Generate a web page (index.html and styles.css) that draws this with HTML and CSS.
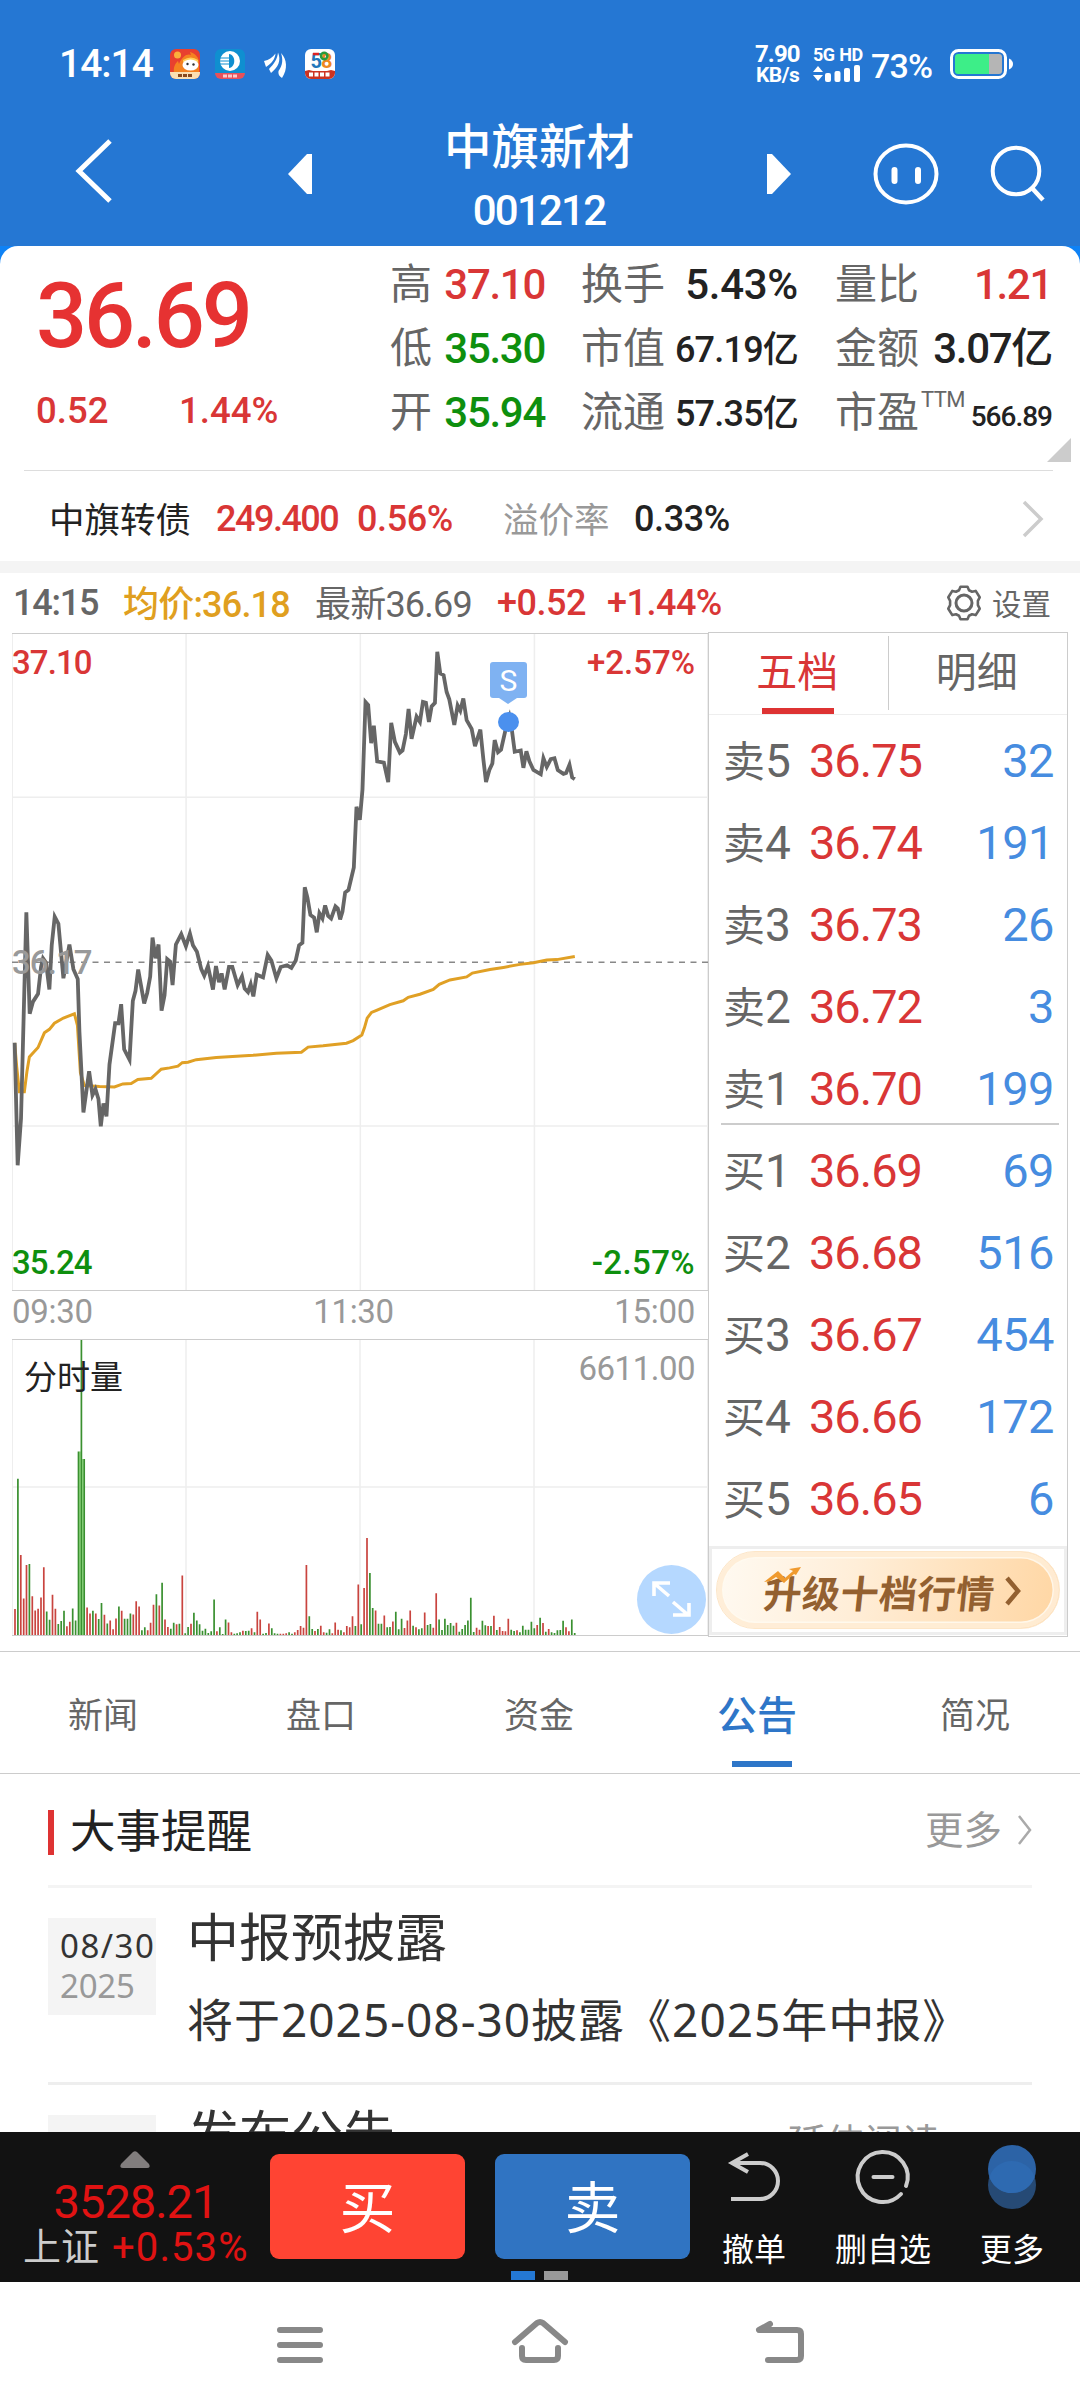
FILE: index.html
```html
<!DOCTYPE html>
<html lang="zh-CN">
<head>
<meta charset="utf-8">
<title>中旗新材 001212</title>
<link rel="stylesheet" href="styles.css">
</head>
<body>
<div class="top">
  <div class="status">
    <span class="clock">14:14</span>
    <svg class="app app-1" viewBox="0 0 30 30"><rect width="30" height="30" rx="6" fill="#e8402f"/><circle cx="7.500" cy="6" r="3.500" fill="#fbb03b"/><path d="M4 24c-1-7 2-10 4-12l1 3c3-8 9-11 12-9l-1-3c6 2 9 6 9 11v10z" fill="#f58220"/><path d="M13 11q8-5 15 0v2H13z" fill="#ffcf5a"/><ellipse cx="20.500" cy="16" rx="8" ry="5.500" fill="#fff"/><circle cx="17.500" cy="15" r="1.200" fill="#333"/><circle cx="23.500" cy="15.500" r="1.200" fill="#333"/><path d="M0 23h30v1a6 6 0 0 1-6 6H6a6 6 0 0 1-6-6z" fill="#fbe0b4"/><path d="M8 26.500h14" stroke="#8a4a1e" stroke-width="3" stroke-dasharray="4 1"/></svg>
    <svg class="app app-2" viewBox="0 0 30 30"><rect width="30" height="30" rx="6" fill="#0f8fd0"/><circle cx="15" cy="12" r="10" fill="#fff"/><path d="M14 5c7 1 7 13 0 14z" fill="#0f8fd0"/><path d="M5 9h10M4.500 12h11M5 15h10" stroke="#0f8fd0" stroke-width="1"/><path d="M0 24h30a6 6 0 0 1-6 6H6a6 6 0 0 1-6-6z" fill="#e8505a"/><path d="M8 27h14" stroke="#ffc9c9" stroke-width="3" stroke-dasharray="4 1"/></svg>
    <svg class="wing" viewBox="0 0 22 27"><path d="M17 1c6 6 7 16 1 25-3-2-4-4-3.500-7C19 13 19 7 17 1zM14 .500c3.500 8 0 15-7 20.500L5 17c5-5 8.500-10 9-16.500zM11.500 1.500C11 7 8 11 2 15L0 9C5 8 9 5 11.500 1.500z" fill="#fff"/></svg>
    <svg class="app app-4" viewBox="0 0 30 30"><rect width="30" height="30" rx="6" fill="#fff"/><path d="M0 22l4-1 4 1h14l4-1 4 1v2a6 6 0 0 1-6 6H6a6 6 0 0 1-6-6z" fill="#cc3322"/><text x="5.500" y="19" class="t58"><tspan fill="#2277bb">5</tspan><tspan fill="#ee8822">8</tspan></text><circle cx="19.200" cy="7" r="3.200" fill="none" stroke="#2a9a3a" stroke-width="2.500"/><path d="M8 5h6" stroke="#dd2222" stroke-width="2.500"/><path d="M4 25.500h22" stroke="#fff" stroke-width="4" stroke-dasharray="4 1.500"/></svg>
    <div class="net"><span>7.90</span><span>KB/s</span></div>
    <div class="signal"><span>5G HD</span>
      <svg viewBox="0 0 48 17"><path d="M0 7l5-6 5 6zM0 10h10l-5 6z" fill="#fff"/><g fill="#fff"><rect x="12" y="8" width="6" height="9" rx="2"/><rect x="21.500" y="6" width="6" height="11" rx="2"/><rect x="31" y="3" width="6" height="14" rx="2"/><rect x="41" y="0" width="6" height="17" rx="2"/></g></svg>
    </div>
    <span class="pct">73%</span>
    <svg class="battery" viewBox="0 0 64 30"><rect x="1.500" y="1.500" width="54" height="27" rx="7" fill="none" stroke="#fff" stroke-width="3"/><path d="M8 5h32v20H8a3 3 0 0 1-3-3V8a3 3 0 0 1 3-3z" fill="#3dee88"/><path d="M39 5h10a3 3 0 0 1 3 3v14a3 3 0 0 1-3 3H39z" fill="#b5b5b5"/><path d="M59 9.500q4 2 4 5.500t-4 5.500z" fill="#fff"/></svg>
  </div>
  <div class="title-bar">
    <svg class="back" viewBox="0 0 38 66"><path d="M35 3L4 33l31 30" fill="none" stroke="#fff" stroke-width="5"/></svg>
    <svg class="prev" viewBox="0 0 24 40"><path d="M24 0h-5L0 20l19 20h5z" fill="#fff"/></svg>
    <div class="name"><h1>中旗新材</h1><span>001212</span></div>
    <svg class="next" viewBox="0 0 24 40"><path d="M0 0h5l19 20L5 40H0z" fill="#fff"/></svg>
    <svg class="face" viewBox="0 0 66 62"><ellipse cx="33" cy="31" rx="30.500" ry="28.500" fill="none" stroke="#fff" stroke-width="4"/><path d="M21.500 27v11M45 27v11" stroke="#fff" stroke-width="6" stroke-linecap="round"/></svg>
    <svg class="search" viewBox="0 0 56 58"><circle cx="26" cy="26" r="23.300" fill="none" stroke="#fff" stroke-width="4"/><path d="M42 43l11 12" stroke="#fff" stroke-width="4.500"/></svg>
  </div>
</div>

<div class="sheet-bg"><div class="quote">
  <div class="last">
    <div class="price">36.69</div>
    <div class="change"><span>0.52</span><span>1.44%</span></div>
  </div>
  <dl class="stats">
    <dt>高</dt><dd class="up">37.10</dd><dt>换手</dt><dd>5.43%</dd><dt>量比</dt><dd class="up">1.21</dd>
    <dt>低</dt><dd class="down">35.30</dd><dt>市值</dt><dd class="mid">67.19亿</dd><dt>金额</dt><dd>3.07亿</dd>
    <dt>开</dt><dd class="down">35.94</dd><dt>流通</dt><dd class="mid">57.35亿</dd><dt>市盈<sup>TTM</sup></dt><dd class="small">566.89</dd>
  </dl>
  <i class="corner"></i>
</div></div>

<div class="bond">
  <span class="bond-name">中旗转债</span><span class="bond-price up">249.400</span><span class="bond-chg up">0.56%</span><span class="bond-label">溢价率</span><span class="bond-rate">0.33%</span>
  <svg viewBox="0 0 22 38"><path d="M2 2l17 17L2 36" fill="none" stroke="#ccc" stroke-width="3.500"/></svg>
</div>

<div class="info">
  <span class="i-time">14:15</span><span class="i-avg">均价:36.18</span><span class="i-last">最新36.69</span><span class="i-diff up">+0.52</span><span class="i-pct up">+1.44%</span>
  <svg viewBox="0 0 36 36"><path d="M14.500 1.800h7l1.500 3.500 3 1.400 3.700-.8 4 6.400-1.800 3.500v4.400l1.800 3.500-4 6.400-3.700-.8-3 1.400-1.500 3.500h-7L13 30.700l-3-1.400-3.700.8-4-6.400 1.800-3.500v-4.400l-1.800-3.500 4-6.400 3.700.8 3-1.400z" fill="none" stroke="#666" stroke-width="2.600" stroke-linejoin="round"/><circle cx="18" cy="18" r="8" fill="none" stroke="#666" stroke-width="3"/></svg>
  <span class="i-set">设置</span>
</div>

<div class="market">
  <div class="charts">
    <div class="price-chart">
      <svg class="plot" viewBox="38 31 2085 1515" preserveAspectRatio="none">
        <path class="grid" d="M38 408H2123M38 1167H2123M559.500 31V1546M1081.500 31V1546M1603 31V1546"/>
        <path class="zero" d="M38 789H2123"/>
        <polyline class="avg" points="46,975 52,1030 60,1088 75,1088 83,1040 90,1008 116,986 135,952 150,944 165,930 192,918 225,908 234,935 243,1045 255,1074 300,1076 345,1077 370,1070 395,1069 415,1060 455,1057 485,1036 510,1033 535,1029 548,1021 565,1020 590,1014 650,1009 760,1004 830,999 905,997 925,985 970,982 1040,976 1060,970 1086,957 1094,940 1102,918 1115,905 1130,900 1170,887 1210,878 1225,870 1260,863 1300,852 1318,840 1350,830 1400,823 1417,814 1470,806 1510,801 1560,794 1600,790 1640,784 1670,783 1724,776"/>
        <polyline class="line" points="46,975 55,1258 65,1150 81,674 91,908 101,880 116,862 125,800 131,780 140,790 150,852 157,750 166,684 177,700 192,826 210,748 222,805 235,828 240,950 252,1136 269,1041 279,1096 288,1082 297,1105 304,1168 312,1115 321,1145 330,1025 347,930 357,930 365,886 374,990 390,1014 400,878 408,855 416,806 434,884 443,860 452,822 459,732 468,780 477,748 486,901 495,865 503,782 512,788 519,842 529,748 545,724 559,752 571,723 580,750 592,765 605,805 614,820 625,798 640,852 649,798 658,835 666,815 675,852 688,800 698,800 714,842 727,822 735,850 745,858 753,840 761,868 771,818 790,824 804,772 815,785 830,826 843,800 862,796 875,802 888,785 898,750 908,744 915,616 923,640 932,680 943,686 951,720 959,676 968,688 976,658 985,682 994,688 1007,660 1014,665 1021,690 1028,672 1036,628 1046,622 1062,570 1070,430 1080,460 1088,390 1097,188 1105,195 1114,283 1122,243 1132,325 1152,328 1165,373 1174,236 1185,280 1200,305 1208,300 1218,262 1226,204 1235,273 1250,222 1260,234 1269,188 1278,190 1287,234 1295,198 1305,190 1312,72 1321,122 1331,126 1340,165 1348,182 1363,241 1373,196 1381,208 1390,180 1400,230 1415,250 1425,290 1441,252 1450,320 1458,373 1468,345 1477,330 1484,276 1494,304 1503,298 1520,240 1528,222 1535,250 1544,303 1562,300 1570,340 1579,302 1588,325 1600,345 1622,355 1630,318 1640,338 1652,320 1663,318 1673,345 1690,354 1698,352 1708,333 1716,362 1724,366"/>
      </svg>
      <span class="lab high up">37.10</span><span class="lab high-pct up">+2.57%</span>
      <span class="lab base">36.17</span>
      <span class="lab low down">35.24</span><span class="lab low-pct down">-2.57%</span>
      <div class="marker">S</div><i class="dot"></i>
    </div>
    <div class="axis"><span>09:30</span><span>11:30</span><span>15:00</span></div>
    <div class="volume">
      <svg class="plot" id="volume" viewBox="0 0 696 297" preserveAspectRatio="none">
        <path class="grid" d="M0 148H696M174 0V297M348 0V297M522 0V297"/>
      </svg>
      <span class="vol-name">分时量</span><span class="vol-max">6611.00</span>
      <svg class="expand" viewBox="0 0 69 69"><circle cx="34.500" cy="34.500" r="34.500" fill="#b5d8ff"/><path d="M17 31V18h16M18 19l14 12M52 38v12H36M50 49L36 37" fill="none" stroke="#fff" stroke-width="3.600"/></svg>
    </div>
  </div>
  <div class="book">
    <div class="book-tabs"><span class="on">五档</span><span>明细</span></div>
    <div class="orders sell">
      <div><span>卖<b>5</b></span><span>36.75</span><span>32</span></div>
      <div><span>卖<b>4</b></span><span>36.74</span><span>191</span></div>
      <div><span>卖<b>3</b></span><span>36.73</span><span>26</span></div>
      <div><span>卖<b>2</b></span><span>36.72</span><span>3</span></div>
      <div><span>卖<b>1</b></span><span>36.70</span><span>199</span></div>
    </div>
    <div class="orders">
      <div><span>买<b>1</b></span><span>36.69</span><span>69</span></div>
      <div><span>买<b>2</b></span><span>36.68</span><span>516</span></div>
      <div><span>买<b>3</b></span><span>36.67</span><span>454</span></div>
      <div><span>买<b>4</b></span><span>36.66</span><span>172</span></div>
      <div><span>买<b>5</b></span><span>36.65</span><span>6</span></div>
    </div>
    <div class="promo"><div class="pill"><span>升级十档行情</span>
      <svg class="go" viewBox="0 0 18 28"><path d="M3 1l11 13L3 27" fill="none" stroke="#936030" stroke-width="4.500"/></svg>
      <svg class="trend" viewBox="0 0 38 18"><path d="M0 15L14 4l7 7 8-7-4-2 12-2-5 8-2-1-10 9-8-6-6 4z" fill="#f09a2e"/></svg>
    </div></div>
  </div>
</div>

<nav class="tabs"><span>新闻</span><span>盘口</span><span>资金</span><span class="on">公告</span><span>简况</span></nav>

<section class="events">
  <header><h2>大事提醒</h2><span>更多</span><svg viewBox="0 0 16 32"><path d="M2 2l11 14L2 30" fill="none" stroke="#aaa" stroke-width="2.500"/></svg></header>
  <article>
    <div class="date"><b>08/30</b><span>2025</span></div>
    <div class="body"><h3>中报预披露</h3><p>将于2025-08-30披露《2025年中报》</p></div>
  </article>
  <article>
    <div class="date"><b class="cut">/</b></div>
    <div class="body"><h3>发布公告</h3></div>
    <span class="read">延伸阅读</span>
  </article>
</section>

<footer class="trade">
  <div class="index"><svg viewBox="0 0 30 17"><path d="M13 1q2-1.500 4 0l12 12q2 4-2 4H3q-4 0-2-4z" fill="#817d7d"/></svg><b>3528.21</b><div><span>上证</span><em>+0.53%</em></div></div>
  <div class="btn buy">买</div>
  <div class="btn sell-btn">卖</div>
  <div class="act act-1"><svg viewBox="0 0 52 52"><path d="M20 3L4 12l16 9M4 12h28a17.500 17.500 0 0 1 0 36H3" fill="none" stroke="#ccc" stroke-width="4"/></svg><span>撤单</span></div>
  <div class="act act-2"><svg viewBox="0 0 56 56"><path d="M51 37A25 25 0 1 0 46 45" fill="none" stroke="#ccc" stroke-width="4" stroke-linecap="round"/><path d="M18.500 28h19" stroke="#ccc" stroke-width="4" stroke-linecap="round"/></svg><span>删自选</span></div>
  <div class="act act-3"><svg viewBox="0 0 48 64"><circle cx="24" cy="40" r="24" fill="#264a75"/><circle cx="24" cy="24" r="24" fill="#2c63a6"/><path d="M1.350 32a24 24 0 0 1 45.300 0 24 24 0 0 1-45.300 0z" fill="#2e6ab1"/></svg><span>更多</span></div>
  <div class="pager"><i></i><i></i></div>
</footer>
<div class="sysnav">
  <svg viewBox="0 0 46 40"><path d="M3 5h40M3 20h40M3 35h40"/></svg>
  <svg class="home" viewBox="0 0 56 46"><path d="M3 24L25 5q3-2 6 0l22 19M10 30v8q0 4 4 4h28q4 0 4-4v-8"/></svg>
  <svg class="ret" viewBox="0 0 50 44"><path d="M14 4L3 10h38q4 0 4 4v22q0 4-4 4H12"/></svg>
</div>
<script src="chart.js"></script>
</body>
</html>
```
FILE: styles.css
```css
* { box-sizing: border-box; margin: 0; padding: 0; }
body { width: 1080px; height: 2408px; overflow: hidden; background: #fff; color: #222; font-family: Roboto, "Noto Sans CJK SC", sans-serif; display: flex; flex-direction: column; }
svg { display: block; flex: none; overflow: visible; }
b, em, i, h1, h2, h3 { font-weight: inherit; font-style: normal; }
span { white-space: nowrap; }
.up { color: #d93636 !important; }
.down { color: #0e8f0e !important; }

.top { height: 246px; background: #2577d3; color: #fff; }
.status { height: 128px; display: flex; align-items: center; padding-left: 59px; font-weight: 500; }
.clock { font-size: 39px; width: 111px; letter-spacing: -1px; }
.app { width: 30px; height: 30px; margin-right: 15px; }
.app-2 { margin-right: 19px; }
.wing { width: 22px; height: 27px; margin: 2px 19px 0 0; }
.app-4 { margin-right: 0; }
.t58 { font: 700 20px Roboto, sans-serif; letter-spacing: -1px; }
.net { width: 58px; margin-left: 420px; font-size: 24px; line-height: 21px; font-weight: 700; display: flex; flex-direction: column; letter-spacing: -.9px; margin-top: 2px; }
.net span + span { font-size: 21px; margin-left: 1px; letter-spacing: -.5px; }
.signal { width: 58px; font-size: 18px; line-height: 20px; font-weight: 700; letter-spacing: -.6px; word-spacing: 1px; margin-top: -1px; }
.signal svg { width: 48px; height: 17px; }
.signal span { display: block; }
.pct { font-size: 34px; width: 79px; letter-spacing: -.8px; margin-top: 4px; }
.battery { width: 64px; height: 30px; }
.title-bar { height: 118px; display: flex; }
.back { width: 38px; height: 66px; margin: 10px 0 0 75px; }
.prev { width: 24px; height: 40px; margin: 26px 0 0 175px; }
.name { width: 188px; margin-left: 135px; text-align: center; }
.name h1 { font-size: 47.500px; line-height: 56px; margin: -8px -10px 0 -14px; font-weight: 500; white-space: nowrap; }
.name span { display: block; font-size: 42px; line-height: 50px; margin: 10px 4px 0 0; letter-spacing: -1.800px; font-weight: 500; }
.next { width: 24px; height: 40px; margin: 26px 0 0 132px; }
.face { width: 66px; height: 62px; margin: 15px 0 0 82px; }
.search { width: 56px; height: 58px; margin: 17px 0 0 51px; }

.sheet-bg { background: #0f82f5; }
.quote { position: relative; height: 225px; background: #fff; border-radius: 18px 18px 0 0; display: flex; }
.quote::after { content: ""; position: absolute; left: 24px; right: 27px; bottom: 0; height: 1px; background: #ddd; }
.last { width: 390px; padding-left: 36px; color: #d93636; font-weight: 500; }
.price { font-size: 90px; line-height: 100px; margin-top: 21px; color: #e63232; letter-spacing: -3.200px; }
.change { display: flex; margin-top: 24px; font-size: 36.500px; line-height: 40px; }
.change span { width: 143px; letter-spacing: 0; }
.stats { display: grid; grid-template-columns: 48px 107px 124px 129px 121px 133px; grid-auto-rows: 64px; margin-top: 7px; line-height: 64px; font-size: 42px; }
.stats dt { color: #666; white-space: nowrap; }
.stats dt:nth-of-type(3n+2) { padding-left: 36px; }
.stats dt:nth-of-type(3n) { padding-left: 37px; }
.stats dd { text-align: right; font-weight: 500; letter-spacing: -1.300px; white-space: nowrap; justify-self: end; }
.stats dd:nth-of-type(2) { letter-spacing: -.3px; }
.stats .mid { font-size: 36px; letter-spacing: -.8px; line-height: 67px; }
.stats .small { font-size: 28px; line-height: 72px; letter-spacing: -1px; }
.stats sup { font-size: 22px; line-height: 0; vertical-align: 20px; margin-left: 2px; letter-spacing: -.6px; color: #666; }
.corner { position: absolute; right: 9px; top: 192px; width: 24px; height: 24px; background: #ccc; clip-path: polygon(100% 0, 100% 100%, 0 100%); }

.bond { height: 102px; border-bottom: 12px solid #f4f4f4; display: flex; align-items: center; padding: 4px 0 0 49px; font-size: 36px; }
.bond span { font-weight: 500; letter-spacing: -.4px; margin-top: 2px; }
.bond .bond-name { width: 167px; font-weight: 400; font-size: 35.500px; letter-spacing: 0; margin-top: -1px; }
.bond .bond-price { width: 141px; letter-spacing: -1.500px; }
.bond-chg { width: 146px; }
.bond .bond-label { width: 131px; color: #999; font-size: 35.500px; font-weight: 400; letter-spacing: 0; margin-top: -1px; }
.bond-rate { width: 388px; }
.bond svg { width: 22px; height: 38px; margin-top: 2px; }

.info { height: 60px; display: flex; align-items: center; padding: 0 0 1px 13px; font-size: 36px; font-weight: 500; color: #666; letter-spacing: -.5px; }
.i-time { width: 110px; letter-spacing: -1.200px; margin-top: 1px; }
.i-avg { width: 192px; color: #e09f20; letter-spacing: -.8px; margin-top: -3px; }
.i-last { width: 182px; font-weight: 400; letter-spacing: -.8px; margin-top: -3px; }
.i-diff { width: 110px; }
.i-pct { width: 339px; }
.info svg { width: 36px; height: 36px; margin-right: 10px; }
.i-set { font-size: 29.500px; font-weight: 400; letter-spacing: 0; margin-top: -1px; }

.market { display: flex; height: 1019px; padding-left: 12px; border-bottom: 1px solid #ccc; }
.charts { width: 696px; }
.price-chart, .volume { position: relative; border: solid #ccc; border-width: 1px 0; }
.price-chart { height: 658px; }
.volume { height: 297px; }
.price-chart::before, .volume::before { content: ""; position: absolute; inset: 0; border: solid #eee; border-width: 0 1px; }
.plot { position: absolute; left: 0; top: 0; width: 100%; height: 100%; }
.plot * { vector-effect: non-scaling-stroke; fill: none; }
.grid { stroke: #eee; stroke-width: 1.500; }
.zero { stroke: #888; stroke-width: 1.500; stroke-dasharray: 6 5.500; }
.line { stroke: #666; stroke-width: 3.800; }
.avg { stroke: #e0a025; stroke-width: 3; }
.vol-up { stroke: #c9443f; stroke-width: 1.700; }
.vol-down { stroke: #3a9030; stroke-width: 1.700; }
.vol-peak { stroke: #9be28c; stroke-width: 2; }
.lab { position: absolute; font-size: 33px; line-height: 36px; font-weight: 500; letter-spacing: -.9px; }
.high { left: 0; top: 11px; }
.high-pct { right: 13px; top: 11px; letter-spacing: 0; }
.base { left: 0; top: 311px; color: #999; }
.low { left: 0; bottom: 9px; }
.low-pct { right: 13px; bottom: 9px; letter-spacing: .4px; }
.marker { position: absolute; left: 478px; top: 28px; width: 37px; height: 36px; background: #7fb2f2; border-radius: 3px; color: #fff; font-size: 30px; line-height: 37px; text-align: center; }
.marker::after { content: ""; position: absolute; left: 9px; top: 36px; width: 18px; height: 6px; background: inherit; clip-path: polygon(0 0, 100% 0, 50% 100%); }
.dot { position: absolute; left: 486px; top: 78px; width: 21px; height: 20px; border-radius: 50%; background: #4b90ee; }
.axis { height: 48px; display: flex; justify-content: space-between; padding-right: 13px; font-size: 33px; line-height: 42px; color: #999; letter-spacing: -.3px; }
.vol-name { position: absolute; left: 12px; top: 14px; font-size: 33px; line-height: 48px; }
.vol-max { position: absolute; right: 13px; top: 9px; font-size: 33px; line-height: 40px; color: #999; letter-spacing: -.5px; }
.expand { position: absolute; right: 2px; top: 225px; width: 69px; height: 69px; }

.book { width: 360px; height: 1005px; border: 1px solid #ccc; margin-top: -1px; }
.book-tabs { height: 82px; border-bottom: 1px solid #eee; display: flex; font-size: 41px; line-height: 81px; color: #666; text-align: center; }
.book-tabs span { flex: 1; position: relative; }
.book-tabs span + span { padding-right: 2px; }
.book-tabs .on { color: #d93636; padding-right: 3px; }
.book-tabs .on::before { content: ""; position: absolute; left: 53px; bottom: 0; width: 72px; height: 6px; background: #de3333; }
.book-tabs .on::after { content: ""; position: absolute; right: 0; top: 3px; bottom: 4px; width: 1px; background: #ccc; }
.orders { padding: 5px 8px 0 14px; }
.orders + .orders { padding-top: 0; }
.orders div { display: grid; grid-template-columns: 64px 135px 1fr; height: 82px; line-height: 82px; }
.orders span { font-size: 47px; text-align: right; letter-spacing: -1px; }
.orders span:first-child { color: #666; font-size: 42px; text-align: left; letter-spacing: 0; }
.orders b { font-size: 46px; }
.orders span:nth-child(2) { color: #d93636; }
.orders span:nth-child(3) { color: #468ce0; padding-right: 5px; letter-spacing: -.5px; }
.sell { position: relative; }
.sell::after { content: ""; position: absolute; left: 12px; right: 8px; bottom: 5px; height: 2px; background: #ccc; }
.promo { height: 89px; margin: 6px 0 0; border: 3px solid #eee; padding: 2px 4px; }
.pill { position: relative; height: 78px; width: 344px; border-radius: 39px; border: 1px solid #fde6c8; background: linear-gradient(100deg, #fffaf2 0%, #ffeed8 40%, #ffd6a3 100%); box-shadow: inset 0 0 0 5px rgba(255,205,145,.25), inset 0 0 0 6.500px rgba(255,250,240,.9); display: flex; align-items: center; padding: 2px 0 0 47px; }
.pill span { font-size: 38px; font-weight: 700; color: #936030; transform: skewX(-6deg); width: 240px; letter-spacing: .5px; }
.go { width: 18px; height: 28px; margin-left: 0; }
.trend { position: absolute; left: 47px; top: 15px; width: 38px; height: 18px; }

.tabs { height: 122px; border-bottom: 1px solid #ccc; display: grid; grid-template-columns: repeat(5, 218px); justify-content: center; text-align: center; font-size: 35px; line-height: 130px; color: #666; overflow: hidden; }
.tabs span { position: relative; left: -1px; height: 121px; }
.tabs .on { font-size: 40px; font-weight: 500; color: #2e76c8; }
.tabs .on::after { content: ""; position: absolute; left: 84px; bottom: 6px; width: 60px; height: 6px; background: #2e76c8; }

.events { height: 358px; overflow: hidden; padding: 0 48px; }
.events header { height: 114px; border-bottom: 3px solid #f4f4f4; display: flex; align-items: center; }
.events h2 { font-size: 45.500px; line-height: 45px; border-left: 6px solid #de3333; padding-left: 16px; flex: 1; margin-top: 6px; }
.events header span { font-size: 38.500px; color: #999; margin: -6px 15px 0 0; }
.events header svg { width: 16px; height: 32px; margin-right: -1px; }
article { height: 197px; border-bottom: 3px solid #eee; display: flex; color: #333; font-family: "Noto Sans", "Noto Sans CJK SC", sans-serif; }
article + article { border: 0; }
.date { width: 108px; height: 97px; margin-top: 30px; background: #f4f4f4; padding: 8px 0 0 12px; font-size: 33px; }
.date b, .date span { display: block; line-height: 40px; letter-spacing: 1.500px; }
.date span { color: #999; letter-spacing: -.2px; }
.date .cut { padding: 2px 0 0 38px; }
.body { margin-left: 31px; flex: 1; }
.body h3 { font-size: 52px; line-height: 60px; margin-top: 19px; white-space: nowrap; }
.body p { font-size: 46px; line-height: 60px; margin-top: 22px; white-space: nowrap; letter-spacing: 1px; }
.read { font-size: 38px; line-height: 50px; color: #999; margin: 31px 92px 0 0; }

.trade { position: relative; height: 150px; background: #121212; display: flex; font-size: 32px; }
.index { width: 270px; display: flex; flex-direction: column; align-items: center; color: #e01212; }
.index svg { width: 30px; height: 17px; margin: 19px 0 0 0; }
.index b { font-size: 47px; line-height: 48px; margin: 10px 0 0 1px; letter-spacing: -1px; }
.index div { display: flex; width: 246px; margin-left: 22px; font-size: 40px; line-height: 43px; }
.index span { color: #ccc; font-size: 38px; width: 89px; }
.index em { letter-spacing: 1.100px; }
.btn { width: 195px; height: 105px; margin: 22px 30px 0 0; border-radius: 9px; background: #ff4433; color: #fff; font-size: 56px; line-height: 110px; text-align: center; }
.sell-btn { background: #3074c2; margin-right: 0; }
.act { display: flex; flex-direction: column; align-items: center; justify-content: space-between; color: #fff; line-height: 40px; height: 138px; width: 130px; margin-left: -1px; }
.act-1 svg { width: 52px; height: 52px; margin-top: 19px; }
.act-2 svg { width: 56px; height: 56px; margin-top: 17px; }
.act-3 svg { width: 48px; height: 64px; margin-top: 13px; }
.pager { position: absolute; left: 511px; top: 139px; display: flex; gap: 9px; }
.pager i { width: 24px; height: 9px; background: #2478d4; }
.pager i + i { background: #999; }
.sysnav { height: 126px; display: flex; padding-left: 277px; }
.sysnav svg { width: 46px; height: 40px; margin-top: 43px; fill: none; stroke: #888; stroke-width: 6; stroke-linecap: round; stroke-linejoin: round; }
.sysnav .home { width: 56px; height: 46px; margin: 36px 0 0 189px; }
.sysnav .ret { width: 50px; height: 44px; margin: 38px 0 0 188px; }
```
FILE: chart.js
```js
// Per-minute volume: bar height followed by r (price rose) or g (price fell)
const bars = `78r 471g 241r 110r 211r 214g 117r 74r 79r 113r 204r 71g 46g 121r 79r 33g 42g 73g 26r 40r
80g 44g 553g 889g 530g 83r 65r 73g 65r 48g 96g 61r 35g 44r 17r 50r 86g 73r 49g 49g
65g 62r 102r 86r 14g 23g 14r 37r 91r 123g 89r 157g 47r 24r 19g 37g 32r 34g 179r 5g
24g 34r 67g 44g 32g 13g 19g 6g 11g 107g 11r 23g 3g 47g 38r 8r 4g 5g 8g 13r
12g 13g 20r 8g 70r 47r 4g 6g 35r 20g 5g 4g 4r 4r 5r 8g 4g 8r 15r 27r
22r 211r 57g 18g 12r 18g 28r 8r 7g 17g 5r 38r 16r 14g 8r 27r 23r 57r 27g 152r
32g 142r 292r 187g 81g 74r 34g 34g 59r 23g 24g 41r 70g 17g 49g 21r 44r 74r 28g 23r
17g 20g 68r 30g 33g 22r 126r 47g 15g 49g 30g 36g 28g 37r 10g 18g 30g 44g 112g 9g
22r 16r 43g 29g 27r 27g 58r 15g 24r 12r 11r 49r 16g 12g 14r 8g 28g 16g 16g 40g
20g 30r 52g 36r 10g 18r 8g 6g 14g 15g 43g 23r 11r 47g 6g`.split(/\s+/);

const MAX = 889, STEP = 2.885, HEIGHT = 297;
const heights = bars.map(bar => parseInt(bar, 10) / MAX * HEIGHT);
const paths = { peak: '', r: '', g: '' };
bars.forEach((bar, i) => {
  const x = 3 + i * STEP;
  paths[bar.slice(-1)] += `M${x.toFixed(1)} ${HEIGHT}v${(-heights[i]).toFixed(1)}`;
  // Tall neighbouring bars merge into a pale green block
  const shared = Math.min(heights[i], heights[i + 1] || 0);
  if (shared > 150) paths.peak += `M${(x + STEP / 2).toFixed(1)} ${HEIGHT}v${(-shared).toFixed(1)}`;
});
for (const [key, cls] of [['peak', 'vol-peak'], ['r', 'vol-up'], ['g', 'vol-down']]) {
  const path = document.createElementNS('http://www.w3.org/2000/svg', 'path');
  path.setAttribute('d', paths[key]);
  path.setAttribute('class', cls);
  document.getElementById('volume').append(path);
}
```
